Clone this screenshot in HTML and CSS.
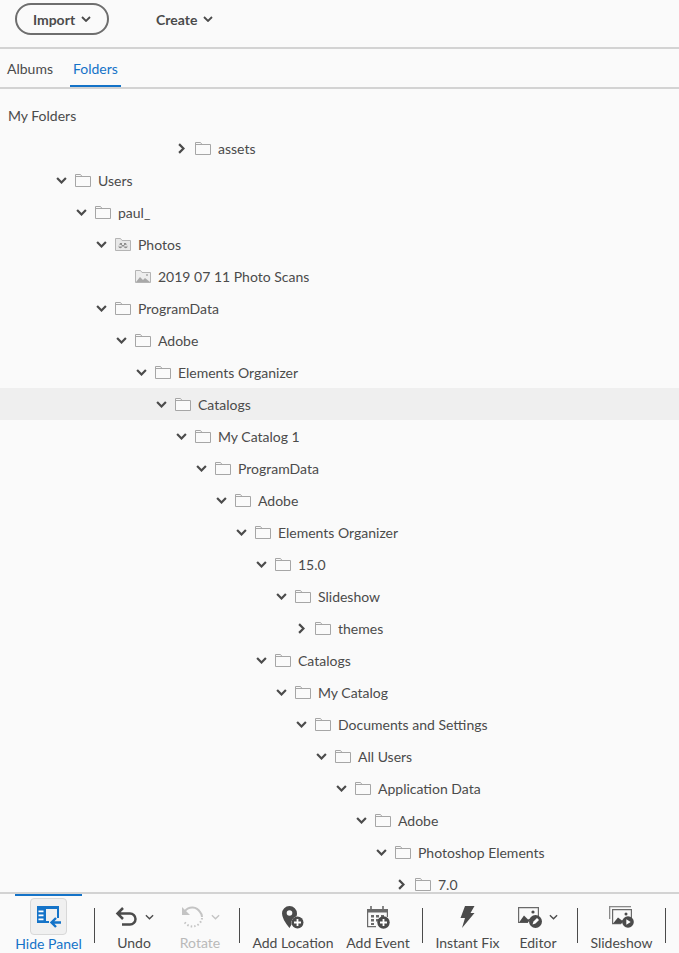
FILE: index.html
```html
<!DOCTYPE html>
<html lang="en">
<head>
    <meta charset="UTF-8"/>
    <title>Folders</title>
    <link rel="stylesheet" href="styles.css">
</head>
<body>
<div id="app">
    <div class="topbar">
        <button class="import-button">Import <svg class="caret" viewBox="0 0 10 6"><path d="M1 1l4 4 4-4"/></svg></button>
        <button class="create-button">Create <svg class="caret" viewBox="0 0 10 6"><path d="M1 1l4 4 4-4"/></svg></button>
    </div>

    <div class="tabs">
        <div class="tab">Albums</div>
        <div class="tab active">Folders</div>
    </div>

    <div class="tree">
        <svg class="defs" width="0" height="0">
            <symbol id="folder" viewBox="0 0 16 13"><path d="M.5 12.5V.5h5l1.5 2h8.500v10z" fill="#fafafa" stroke="#a6a6a6"/><path d="M.5 2.5H7" stroke="#a6a6a6" fill="none"/></symbol>
            <symbol id="open" viewBox="0 0 10 6"><path d="M1 .8l4 4 4-4" fill="none" stroke="#4b4b4b" stroke-width="2"/></symbol>
            <symbol id="closed" viewBox="0 0 6 10"><path d="M.8 1l4 4-4 4" fill="none" stroke="#4b4b4b" stroke-width="2"/></symbol>
        </svg>
        <div class="tree-title">My Folders</div>

        <div class="row" style="--depth:6"><svg class="arrow-r"><use href="#closed"/></svg><svg class="folder"><use href="#folder"/></svg><span>assets</span></div>
        <div class="row" style="--depth:0"><svg class="arrow-d"><use href="#open"/></svg><svg class="folder"><use href="#folder"/></svg><span>Users</span></div>
        <div class="row" style="--depth:1"><svg class="arrow-d"><use href="#open"/></svg><svg class="folder"><use href="#folder"/></svg><span>paul_</span></div>
        <div class="row" style="--depth:2"><svg class="arrow-d"><use href="#open"/></svg>
            <svg class="folder" viewBox="0 0 16 13"><path d="M.5 12.500V.5h5l1.500 2h8.500v10z" fill="#e8e8e8" stroke="#b4b4b4"/><path d="M3.500 8.500a1.800 1.800 0 1 0 3.600 0a1.800 1.800 0 1 0-3.600 0M8.900 8.500a1.800 1.800 0 1 0 3.600 0a1.800 1.800 0 1 0-3.600 0M5 5h2v2h2V5h2l1.200 3.500H3.800z" fill="#8e8e8e"/></svg><span>Photos</span></div>
        <div class="row" style="--depth:3"><span class="arrow-none"></span>
            <svg class="folder" viewBox="0 0 16 13"><path d="M.5 12.5V.5h5l1.500 2h8.500v10z" fill="#ededed" stroke="#b4b4b4"/><path d="M1 12l4-5 3 3 2-2 5 4z" fill="#a8a8a8"/><circle cx="12" cy="5" r="1" fill="#a8a8a8"/></svg><span>2019 07 11 Photo Scans</span></div>
        <div class="row" style="--depth:2"><svg class="arrow-d"><use href="#open"/></svg><svg class="folder"><use href="#folder"/></svg><span>ProgramData</span></div>
        <div class="row" style="--depth:3"><svg class="arrow-d"><use href="#open"/></svg><svg class="folder"><use href="#folder"/></svg><span>Adobe</span></div>
        <div class="row" style="--depth:4"><svg class="arrow-d"><use href="#open"/></svg><svg class="folder"><use href="#folder"/></svg><span>Elements Organizer</span></div>
        <div class="row selected" style="--depth:5"><svg class="arrow-d"><use href="#open"/></svg><svg class="folder"><use href="#folder"/></svg><span>Catalogs</span></div>
        <div class="row" style="--depth:6"><svg class="arrow-d"><use href="#open"/></svg><svg class="folder"><use href="#folder"/></svg><span>My Catalog 1</span></div>
        <div class="row" style="--depth:7"><svg class="arrow-d"><use href="#open"/></svg><svg class="folder"><use href="#folder"/></svg><span>ProgramData</span></div>
        <div class="row" style="--depth:8"><svg class="arrow-d"><use href="#open"/></svg><svg class="folder"><use href="#folder"/></svg><span>Adobe</span></div>
        <div class="row" style="--depth:9"><svg class="arrow-d"><use href="#open"/></svg><svg class="folder"><use href="#folder"/></svg><span>Elements Organizer</span></div>
        <div class="row" style="--depth:10"><svg class="arrow-d"><use href="#open"/></svg><svg class="folder"><use href="#folder"/></svg><span>15.0</span></div>
        <div class="row" style="--depth:11"><svg class="arrow-d"><use href="#open"/></svg><svg class="folder"><use href="#folder"/></svg><span>Slideshow</span></div>
        <div class="row" style="--depth:12"><svg class="arrow-r"><use href="#closed"/></svg><svg class="folder"><use href="#folder"/></svg><span>themes</span></div>
        <div class="row" style="--depth:10"><svg class="arrow-d"><use href="#open"/></svg><svg class="folder"><use href="#folder"/></svg><span>Catalogs</span></div>
        <div class="row" style="--depth:11"><svg class="arrow-d"><use href="#open"/></svg><svg class="folder"><use href="#folder"/></svg><span>My Catalog</span></div>
        <div class="row" style="--depth:12"><svg class="arrow-d"><use href="#open"/></svg><svg class="folder"><use href="#folder"/></svg><span>Documents and Settings</span></div>
        <div class="row" style="--depth:13"><svg class="arrow-d"><use href="#open"/></svg><svg class="folder"><use href="#folder"/></svg><span>All Users</span></div>
        <div class="row" style="--depth:14"><svg class="arrow-d"><use href="#open"/></svg><svg class="folder"><use href="#folder"/></svg><span>Application Data</span></div>
        <div class="row" style="--depth:15"><svg class="arrow-d"><use href="#open"/></svg><svg class="folder"><use href="#folder"/></svg><span>Adobe</span></div>
        <div class="row" style="--depth:16"><svg class="arrow-d"><use href="#open"/></svg><svg class="folder"><use href="#folder"/></svg><span>Photoshop Elements</span></div>
        <div class="row" style="--depth:17"><svg class="arrow-r"><use href="#closed"/></svg><svg class="folder"><use href="#folder"/></svg><span>7.0</span></div>
    </div>

    <div class="toolbar">
        <div class="tool hide-panel">
            <div class="icon-box">
                <svg width="26" height="23" viewBox="0 0 26 23"><path d="M1 1h22v12h-2V4H10v12h3v2H1z" fill="#1473c8"/><path d="M2.500 5.500h5v1.800h-5zM2.500 9.500h5v1.800h-5zM2.500 13.500h5v1.800h-5z" fill="#fff"/><path d="M25 17.500H15.500M20 13l-4.500 4.500L20 22" fill="none" stroke="#1473c8" stroke-width="2.400"/></svg>
            </div>
            <span>Hide Panel</span>
        </div>
        <div class="sep"></div>
        <div class="tool undo">
            <div class="icon-row">
                <svg width="23" height="20" viewBox="0 0 23 20"><path d="M3 6.500h12a5.500 5.500 0 0 1 0 11H7M8 1L2.500 6.500 8 12" fill="none" stroke="#4b4b4b" stroke-width="2.500"/></svg>
                <svg class="mini" viewBox="0 0 10 6"><path d="M1 1l4 4 4-4"/></svg>
            </div>
            <span>Undo</span>
        </div>
        <div class="tool rotate disabled">
            <div class="icon-row">
                <svg width="23" height="22" viewBox="0 0 23 22"><path d="M4 5a9 9 0 0 1 15 1q2 2 2 5" fill="none" stroke="#c4c4c4" stroke-width="2"/><path d="M21 12a9.500 9.500 0 0 1-18 3" fill="none" stroke="#c4c4c4" stroke-width="2" stroke-dasharray="1.500 2"/><path d="M1 1v8h8z" fill="#c4c4c4"/></svg>
                <svg class="mini" viewBox="0 0 10 6"><path d="M1 1l4 4 4-4"/></svg>
            </div>
            <span>Rotate</span>
        </div>
        <div class="sep"></div>
        <div class="tool add-location">
            <div class="icon-row">
                <svg width="22" height="23" viewBox="0 0 22 23"><path d="M7.500 0a7.500 7.500 0 0 1 7.500 7.500q0 1.500-.5 2.700a7 7 0 0 0-5 8.300L7.500 22Q0 13 0 7.500A7.500 7.500 0 0 1 7.500 0z" fill="#4b4b4b"/><circle cx="7.500" cy="7" r="2.800" fill="#fafafa"/><circle cx="15.500" cy="16.500" r="6" fill="#4b4b4b"/><path d="M15.500 13v7M12 16.500h7" stroke="#fff" stroke-width="1.800"/></svg>
            </div>
            <span>Add Location</span>
        </div>
        <div class="tool add-event">
            <div class="icon-row">
                <svg width="24" height="23" viewBox="0 0 24 23"><path d="M5 0v5M17 0v5" stroke="#6a6a6a" stroke-width="1.600"/><path d="M1 3h21v8h-1.200V6.500H2.200V20H10v1.200H1z" fill="#6a6a6a"/><path d="M5 9h3v2.500H5zM10 9h3v2.500h-3zM15 9h3v2.500h-3zM5 13h3v2.500H5zM10 13h3v2.500h-3zM5 17h3v2H5z" fill="#6a6a6a"/><circle cx="17.500" cy="16.500" r="6.200" fill="#4b4b4b"/><path d="M17.500 13v7M14 16.500h7" stroke="#fff" stroke-width="1.800"/></svg>
            </div>
            <span>Add Event</span>
        </div>
        <div class="sep"></div>
        <div class="tool instant-fix">
            <div class="icon-row">
                <svg width="15" height="22" viewBox="0 0 15 22"><path d="M5 0h9.500l-4 7h4L2 22l3-10H.500z" fill="#4b4b4b"/></svg>
            </div>
            <span>Instant Fix</span>
        </div>
        <div class="tool editor">
            <div class="icon-row">
                <svg width="24" height="21" viewBox="0 0 24 21"><path d="M0 0h21v11h-1.200V1.200H1.200V15H10v1H0z" fill="#6a6a6a"/><path d="M1 15.500l5-7 4 4 3-1-3 4z" fill="#4b4b4b"/><circle cx="15" cy="5" r="1.600" fill="#4b4b4b"/><circle cx="17.500" cy="14.500" r="6.500" fill="#4b4b4b"/><path d="M14.500 17.500l1-3 3.500-3.500 2 2-3.500 3.500z" fill="#fff"/></svg>
                <svg class="mini" viewBox="0 0 10 6"><path d="M1 1l4 4 4-4"/></svg>
            </div>
            <span>Editor</span>
        </div>
        <div class="sep"></div>
        <div class="tool slideshow">
            <div class="icon-row">
                <svg width="25" height="22" viewBox="0 0 25 22"><path d="M0 0h22v1.300H0z" fill="#8a8a8a"/><path d="M0 0h1.300v13H0z" fill="#8a8a8a"/><path d="M3 3h20v9h-1.200V4.200H4.200V17H12v1.200H3z" fill="#6a6a6a"/><path d="M4 17.500l5-6 4 3 2-1-2 4z" fill="#4b4b4b"/><circle cx="17" cy="8" r="1.500" fill="#4b4b4b"/><circle cx="19" cy="16" r="5.800" fill="#4b4b4b"/><path d="M17.300 13.300v5.400l4.400-2.700z" fill="#fff"/></svg>
            </div>
            <span>Slideshow</span>
        </div>
        <div class="sep"></div>
    </div>
</div>
</body>
</html>
```

FILE: styles.css
```css
html, body {
    margin: 0;
    padding: 0;
    height: 100%;
}

body {
    background-color: #fafafa;
    color: #4b4b4b;
    font-family: "Lato", sans-serif;
    font-size: 14px;
    overflow: hidden;
}

#app {
    height: 953px;
    display: flex;
    flex-direction: column;
}

.topbar {
    box-sizing: border-box;
    height: 49px;
    flex: none;
    display: flex;
    align-items: flex-start;
    padding-top: 3px;
    padding-left: 15px;
    border-bottom: 2px solid #d3d3d3;
}

.topbar button {
    font: inherit;
    font-weight: 700;
    color: #4b4b4b;
    background: none;
    display: flex;
    align-items: center;
    gap: 6px;
    height: 32px;
    padding: 0;
}

.import-button {
    box-sizing: border-box;
    width: 94px;
    justify-content: center;
    border: 2px solid #6e6e6e;
    border-radius: 16px;
}

.create-button {
    border: 0;
    margin-left: 47px;
}

.caret {
    width: 10px;
    height: 6px;
    fill: none;
    stroke: #4b4b4b;
    stroke-width: 1.800;
}

.tabs {
    box-sizing: border-box;
    height: 40px;
    flex: none;
    display: flex;
    border-bottom: 2px solid #d3d3d3;
}

.tab {
    box-sizing: border-box;
    height: 38px;
    line-height: 40px;
    padding: 0 7px;
}

.tab.active {
    padding: 0 3px;
    margin-left: 10px;
    color: #1473c8;
    border-bottom: 2px solid #1473c8;
}

.tree {
    flex: 1;
    min-height: 0;
    overflow: hidden;
}

.defs {
    display: block;
}

.tree-title {
    height: 28px;
    padding-left: 8px;
    padding-top: 15px;
    line-height: 23px;
}

.row {
    height: 32px;
    display: flex;
    align-items: center;
    padding-left: calc(56px + var(--depth) * 20px);
}

.row span:last-child {
    margin-left: 7px;
}

.row.selected {
    background-color: #efefef;
}

.arrow-d {
    width: 11px;
    height: 7px;
    margin-right: 8px;
}

.arrow-r {
    width: 7px;
    height: 11px;
    margin-left: 2px;
    margin-right: 10px;
}

.arrow-none {
    width: 19px;
}

.folder {
    width: 16px;
    height: 13px;
    flex: none;
}

.toolbar {
    box-sizing: border-box;
    height: 61px;
    flex: none;
    display: flex;
    align-items: flex-start;
    border-top: 2px solid #d3d3d3;
    padding-left: 15px;
}

.tool {
    display: flex;
    flex-direction: column;
    align-items: center;
    height: 59px;
    white-space: nowrap;
}

.tool span {
    line-height: 20px;
}

.icon-row {
    box-sizing: border-box;
    height: 40px;
    padding-top: 7px;
    display: flex;
    align-items: center;
    gap: 7px;
}

.mini {
    width: 9px;
    height: 6px;
    fill: none;
    stroke: #4b4b4b;
    stroke-width: 1.500;
}

.disabled {
    color: #b9b9b9;
}

.disabled .mini {
    stroke: #c4c4c4;
}

.hide-panel {
    width: 67px;
    color: #1473c8;
    border-top: 2px solid #1473c8;
}

.icon-box {
    box-sizing: border-box;
    width: 37px;
    height: 37px;
    margin-top: 2px;
    margin-bottom: -1px;
    display: flex;
    align-items: center;
    justify-content: center;
    background-color: #f0f0f0;
    border: 1px solid #d8d8d8;
    border-radius: 4px;
}

.undo {
    width: 54px;
}

.rotate {
    width: 54px;
    margin-left: 12px;
}

.add-location {
    width: 82px;
}

.add-event {
    width: 64px;
    margin-left: 12px;
}

.instant-fix {
    width: 65px;
}

.editor {
    width: 38px;
    margin-left: 19px;
    margin-right: 8px;
}

.slideshow {
    width: 63px;
}

.sep {
    width: 1px;
    height: 35px;
    margin: 14px 12px 0;
    flex: none;
    background-color: #4b4b4b;
}
```
